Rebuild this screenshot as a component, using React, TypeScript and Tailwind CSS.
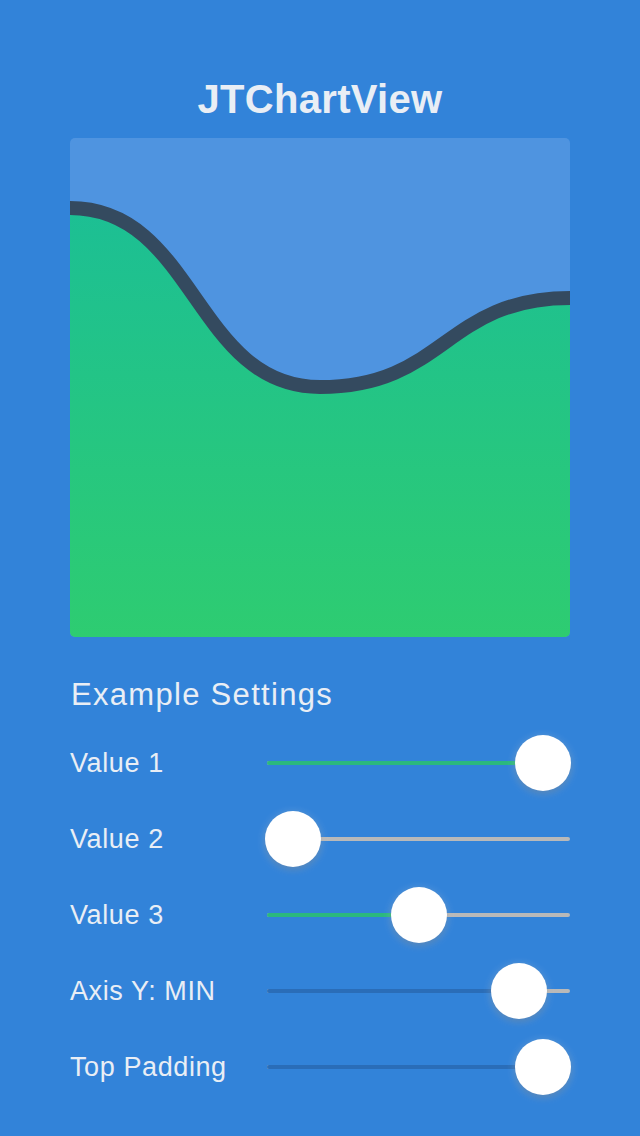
import React from 'react';

const settings = [
  { label: 'Value 1', value: 1, fill: 'bg-[#2bb87e]' },
  { label: 'Value 2', value: 0, fill: 'bg-[#2bb87e]' },
  { label: 'Value 3', value: 0.504, fill: 'bg-[#2bb87e]' },
  { label: 'Axis Y: MIN', value: 0.904, fill: 'bg-[#2a6db8]' },
  { label: 'Top Padding', value: 1, fill: 'bg-[#2a6db8]' },
];

function Chart() {
  // three points, horizontal tangents, like the original smoothed line
  const line = 'M0,70 C125,70 125,249 250,249 C375,249 375,160 500,160';
  return (
    <div className="w-[500px] h-[499px] rounded-[5px] overflow-hidden bg-[#4f94e0]">
      <svg width="500" height="499" viewBox="0 0 500 499" className="block">
        <defs>
          <linearGradient id="fillGrad" x1="0" y1="0" x2="0" y2="1">
            <stop offset="0" stopColor="#1cbf94" />
            <stop offset="1" stopColor="#2ecc71" />
          </linearGradient>
        </defs>
        <path d={line + ' L500,499 L0,499 Z'} fill="url(#fillGrad)" />
        <path d={line} fill="none" stroke="#344a5f" strokeWidth="14" />
      </svg>
    </div>
  );
}

function Slider({ value, fill }: { value: number; fill: string }) {
  const trackW = 303;
  const range = 250;
  const center = 26 + value * range;
  return (
    <div className="relative w-[303px] h-[56px] flex items-center">
      <div className="w-full h-[4px] rounded-full bg-[#b9b9b9]" />
      <div
        className={'absolute left-0 h-[4px] rounded-full ' + fill}
        style={{ width: Math.min(center, trackW) }}
      />
      <div
        className="absolute top-0 w-[56px] h-[56px] rounded-full bg-white shadow-[0_3px_6px_rgba(0,0,0,0.18),0_2px_8px_rgba(255,255,255,0.35)]"
        style={{ left: center - 28 }}
      />
    </div>
  );
}

function App() {
  return (
    <div
      className="min-h-screen w-[640px] h-[1136px] bg-[#3283d9] flex flex-col items-center text-[#e9eef5]"
      style={{ fontFamily: '"Liberation Sans", Arial, sans-serif' }}
    >
      <h1 className="mt-[75px] h-[48px] text-[40px] leading-[48px] font-bold tracking-[0.3px]">JTChartView</h1>
      <div className="mt-[15px]">
        <Chart />
      </div>
      <div className="w-[500px] mt-[40px]">
        <div className="text-[31px] leading-[36px] tracking-[1.3px] pl-[1px]">Example Settings</div>
        <div className="mt-[22px] flex flex-col gap-[20px]">
          {settings.map((s) => (
            <div key={s.label} className="flex items-center justify-between h-[56px]">
              <span className="text-[27px] tracking-[0.6px] leading-[32px]">{s.label}</span>
              <Slider value={s.value} fill={s.fill} />
            </div>
          ))}
        </div>
      </div>
    </div>
  );
}

export default App;
